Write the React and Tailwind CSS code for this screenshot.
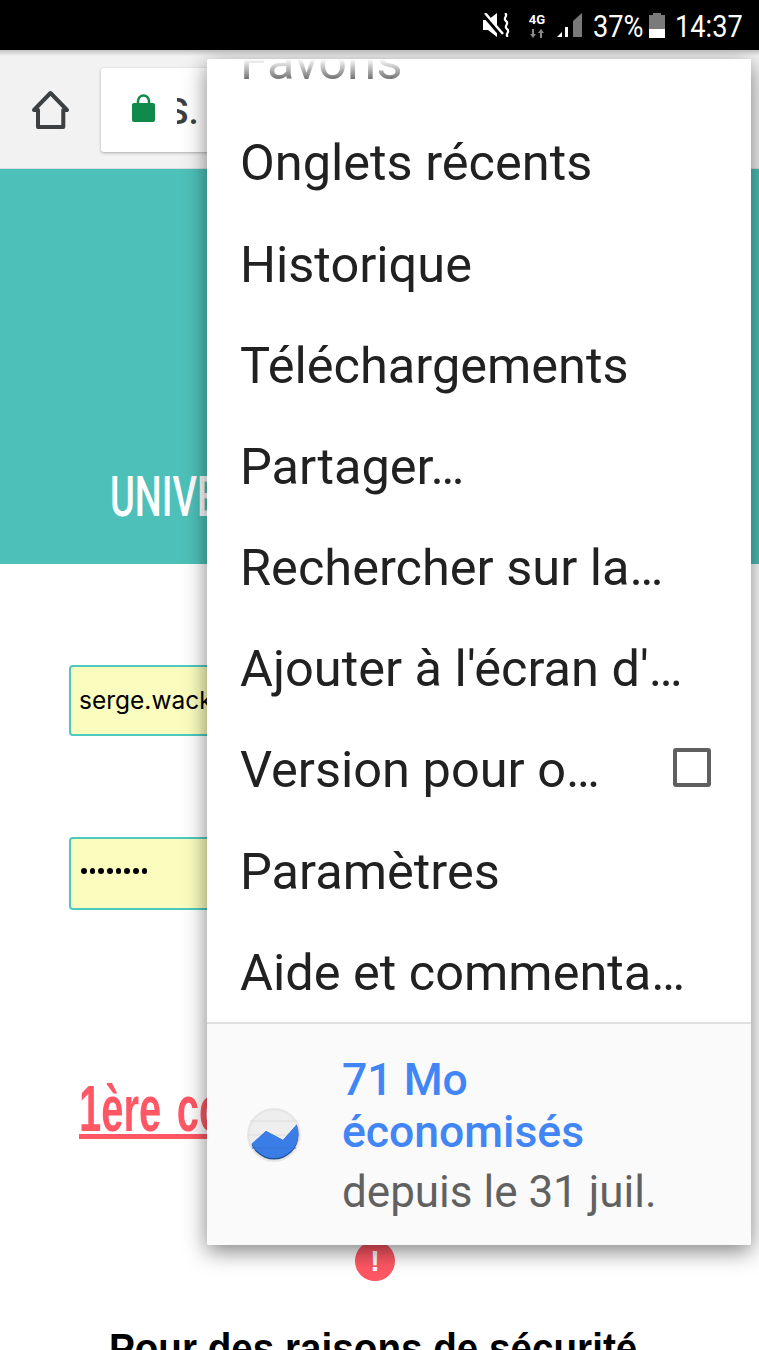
const ROBOTO = 'font-[Roboto,sans-serif]'
const CONDENSED = "font-['Liberation_Sans',sans-serif]"

const MENU_ITEMS = [
  'Onglets récents',
  'Historique',
  'Téléchargements',
  'Partager…',
  'Rechercher sur la…',
  "Ajouter à l'écran d'…",
  'Version pour o…',
  'Paramètres',
  'Aide et commenta…',
]

function StatusBar() {
  return (
    <div className={`h-[50px] bg-black flex items-center justify-end pr-[16px] text-white ${ROBOTO}`}>
      <svg width="27" height="24" viewBox="0 0 27 24" className="mr-[17px]">
        <path d="M0 7h5l9-7v24l-9-7H0z" fill="#fff" />
        <path d="M1 2l17 20" stroke="#000" strokeWidth="4" />
        <path d="M2 0l18 21" stroke="#fff" strokeWidth="2.500" />
        <path d="M22 0c4 3-3 5 1 8s-3 5 1 8-3 5 1 8" stroke="#fff" strokeWidth="2.200" fill="none" />
      </svg>
      <div className="w-[20px] mr-[10px] flex flex-col items-center">
        <span className="text-[13px] leading-[14px] font-bold">4G</span>
        <svg width="16" height="9" viewBox="0 0 16 9" className="mt-[2px]">
          <path d="M4 9L1 5h2V0h2v5h2z" fill="#8a8a8a" />
          <path d="M12 0l3 4h-2v5h-2V4H9z" fill="#8a8a8a" />
        </svg>
      </div>
      <svg width="25" height="24" viewBox="0 0 25 24" className="mr-[11px]">
        <path d="M0 24l5-5v5z" fill="#fff" />
        <path d="M8 14h3v10H8z" fill="#fff" />
        <path d="M16 8l9-8v24h-9z" fill="#7a7a7a" />
      </svg>
      <div className="w-[50px] mr-[6px]">
        <span className="block origin-left scale-x-[0.85] text-[32px] leading-none mt-[1px]">37%</span>
      </div>
      <div className="w-[16px] h-[25px] mr-[10px] flex flex-col items-center">
        <div className="w-[8px] h-[2px] bg-[#7a7a7a]" />
        <div className="w-full h-[14px] bg-[#7a7a7a]" />
        <div className="w-full h-[9px] bg-white" />
      </div>
      <div className="w-[68px]">
        <span className="block origin-left scale-x-[0.85] text-[32px] leading-none mt-[1px]">14:37</span>
      </div>
    </div>
  )
}

function Toolbar() {
  return (
    <div className="relative h-[119px] bg-[#f2f2f2] flex items-start pl-[31px] border-b border-[#dcdcdc]">
      <div className="absolute inset-x-0 top-0 h-[6px] bg-gradient-to-b from-[#c4c4c4] to-[#f2f2f2]" />
      <svg width="40" height="40" viewBox="0 0 40 40" className="mt-[40px] shrink-0" fill="none" stroke="#3c4043" strokeWidth="4" strokeLinejoin="round">
        <path d="M3 20L19.500 3 36 20h-3.700v17H7V20z" />
      </svg>
      <div className="ml-[30px] mt-[18px] w-[600px] h-[84px] bg-white rounded-[3px] shadow-[0_1px_3px_rgba(0,0,0,0.3)] flex items-start pl-[31px] shrink-0">
        <svg width="23" height="29" viewBox="0 0 23 29" className="mt-[25px] shrink-0">
          <path d="M6 12V8a5.500 5.500 0 0 1 11 0v4" fill="none" stroke="#0f8a4a" strokeWidth="2.500" />
          <rect x="0" y="10" width="23" height="19" rx="2" fill="#0f8a4a" />
        </svg>
        <div className={`ml-[22px] mt-[24px] w-[30px] h-[40px] overflow-hidden text-[37px] leading-[40px] font-medium text-[#3c4043] ${ROBOTO}`}>
          <span className="block -ml-[11px]">S.</span>
        </div>
      </div>
    </div>
  )
}

function Page() {
  return (
    <div className="flex flex-col">
      <div className={`h-[395px] bg-[#4dc1b9] pl-[110px] pt-[296px] overflow-hidden ${ROBOTO}`}>
        <span className="block origin-left scale-x-[0.69] text-white text-[55px] leading-[64px] font-medium whitespace-nowrap">UNIVERSITÉ</span>
      </div>
      <div className="pl-[69px] pt-[101px] flex flex-col overflow-hidden">
        <div className="w-[620px] h-[71px] bg-[#fafdbe] border-2 border-[#4dc9c0] rounded-[4px] pl-[8px] flex items-center text-[24.500px] text-black font-[Inter,sans-serif] whitespace-nowrap">
          serge.wacker
        </div>
        <div className="mt-[101px] w-[620px] h-[73px] bg-[#fafdbe] border-2 border-[#4dc9c0] rounded-[4px] pl-[10px] pb-[5px] flex items-center gap-[3.200px]">
          {[0, 1, 2, 3, 4, 5, 6, 7].map((i) => (
            <span key={i} className="w-[5.500px] h-[5.500px] rounded-full bg-black" />
          ))}
        </div>
      </div>
      <div className="pl-[79px] mt-[164px]">
        <span className={`block origin-left scale-x-[0.625] text-[#ff5764] text-[64px] leading-[70px] font-bold underline decoration-[5px] underline-offset-[3px] whitespace-nowrap [word-spacing:7px] ${CONDENSED}`}>
          1ère connexion
        </span>
      </div>
      <div className="mt-[97px] pr-[9px] flex justify-center">
        <div className={`w-[40px] h-[40px] rounded-full bg-[#ff5764] text-white text-[30px] leading-[40px] font-bold text-center ${CONDENSED}`}>!</div>
      </div>
      <div className="mt-[46px] pr-[13px] h-[44px] flex justify-center">
        <span className={`block scale-x-[0.92] text-black text-[42px] leading-[44px] font-bold whitespace-nowrap ${CONDENSED}`}>
          Pour des raisons de sécurité
        </span>
      </div>
    </div>
  )
}

function SavingsIcon() {
  return (
    <svg width="54" height="54" viewBox="0 0 54 54" className="shrink-0">
      <defs>
        <clipPath id="disc">
          <circle cx="27" cy="27" r="24.500" />
        </clipPath>
        <clipPath id="discUp">
          <circle cx="27" cy="25.500" r="24.500" />
        </clipPath>
      </defs>
      <circle cx="27" cy="27" r="27" fill="#e6e6e6" />
      <circle cx="27" cy="27" r="24.500" fill="#eeeeee" />
      <path d="M3 13h48M1 27h52" stroke="#dcdcdc" strokeWidth="1" />
      <g clipPath="url(#disc)">
        <path d="M3 38L19 23l17 9L52 14v40H3z" fill="#23508f" />
      </g>
      <g clipPath="url(#discUp)">
        <path d="M3 37L19 23l17 9L52 14v40H3z" fill="#3b7de6" />
      </g>
      <path d="M5 40h44" stroke="#3572d6" strokeWidth="1" />
    </svg>
  )
}

function OverflowMenu() {
  return (
    <div className={`absolute left-[207px] top-[59px] w-[544px] h-[1186px] bg-white flex flex-col shadow-[0_6px_22px_rgba(0,0,0,0.5)] rounded-[2px] overflow-hidden ${ROBOTO}`}>
      <div className="-mt-[47.600px] h-[101.200px] shrink-0 flex items-center pl-[33px] text-[50.500px] text-[#212121]">
        Favoris
      </div>
      <div className="absolute inset-x-0 top-0 h-[22px] bg-gradient-to-b from-white to-white/30" />
      {MENU_ITEMS.map((label) => (
        <div key={label} className="h-[101.200px] shrink-0 flex items-center justify-between pl-[33px] pr-[40px] text-[50.500px] text-[#212121] whitespace-nowrap">
          <span>{label}</span>
          {label.startsWith('Version') && (
            <span className="-mt-[5px] w-[38px] h-[39px] border-[4px] border-[#5f5f5f] rounded-[3px]" />
          )}
        </div>
      ))}
      <div className="flex-1 -mt-px bg-[#fafafa] border-t-2 border-[#e0e0e0] flex items-center pl-[40px]">
        <SavingsIcon />
        <div className="ml-[41px] pt-[7px] flex flex-col">
          <span className="text-[44.500px] leading-[52px] font-medium text-[#4285f4]">71 Mo<br />économisés</span>
          <span className="mt-[4px] text-[44px] leading-[60px] text-[#616161]">depuis le 31 juil.</span>
        </div>
      </div>
    </div>
  )
}

export default function App() {
  return (
    <div className="relative w-[759px] h-[1350px] bg-white overflow-hidden">
      <StatusBar />
      <Toolbar />
      <Page />
      <OverflowMenu />
    </div>
  )
}
